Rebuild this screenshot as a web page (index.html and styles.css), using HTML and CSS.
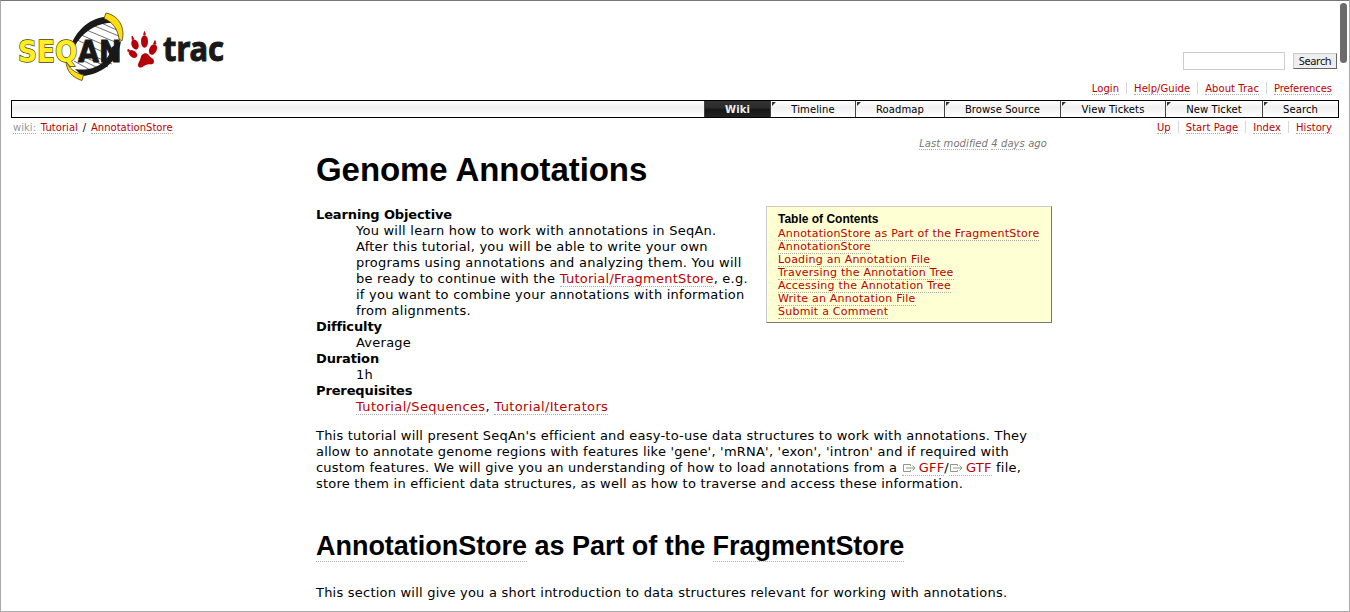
FILE: index.html
```html
<!DOCTYPE html>
<html lang="en">
<head>
<meta charset="utf-8">
<title>Genome Annotations</title>
<link rel="stylesheet" href="styles.css">
</head>
<body>
<div class="page">
  <header class="banner">
    <svg class="logo" width="215" height="75" viewBox="14 9 215 75" role="img" aria-label="SeqAn trac">
      <path d="M105 18C89 21 74 34 71 52L78 72C98 71 116 61 120 40C121 29 116 19 105 18Z" fill="#fff"/>
      <g stroke="#333" stroke-width=".7">
        <path d="M97 21l24 11M90 24l31 13M84 29l36 15M79 34l39 17M75 39l30 14M84 57l24 10M78 58l22 11M74 61l18 10M96 57l16 7"/>
      </g>
      <path d="M70 48C75 32 88 19 104 17L112 23C99 22 82 31 74 48Z" fill="#1a1a1a"/>
      <path d="M121 41C118 63 100 75 82 76L75 69C92 72 108 64 112 47Z" fill="#1a1a1a"/>
      <path d="M106 13C117 15 126 26 122 41L119 39C118 30 113 22 104 18.500Z" fill="#fd1" stroke="#443d08" stroke-width=".8"/>
      <path d="M67 61C68 68 75 73 83.500 75L82 80.500C73 78 66 71 66 61Z" fill="#fd1" stroke="#443d08" stroke-width=".8"/>
      <text class="logo-name" x="18" y="61.800" textLength="59.500" lengthAdjust="spacingAndGlyphs" fill="#fe2" stroke="#443d08" stroke-width="1.400">SEQ</text>
      <text class="logo-name" x="78" y="61.800" textLength="43.500" lengthAdjust="spacingAndGlyphs" fill="#181818" stroke="#181818">AN</text>
      <g fill="#b50008">
        <ellipse cx="144.500" cy="41.500" rx="3.500" ry="6.200"/>
        <ellipse cx="135" cy="44.500" rx="3.500" ry="5.200" transform="rotate(-20 135 44.500)"/>
        <ellipse cx="153" cy="49.500" rx="3.700" ry="5.500" transform="rotate(25 153 49.500)"/>
        <ellipse cx="133" cy="54" rx="3.200" ry="4.700" transform="rotate(-50 133 54)"/>
        <path d="M144.500 31.500l-1 3h2zM132 36l0 3.500l2-.5zM155 40.500l-1.500 3.500l2.500 0zM128 49l-.2 2.500l2-.7z" stroke="#b50008" stroke-width=".8"/>
        <path d="M144 53.500C148 52 149 56 151 57.500C155 59 155 64 151 64.500C147 64 146 65 142.500 67C138 69 137 65 139 62C141 59 140 55 144 53.500Z"/>
      </g>
      <text class="logo-trac" x="163" y="61" textLength="61" lengthAdjust="spacingAndGlyphs" fill="#181818" stroke="#181818">trac</text>
    </svg>
    <div class="tools">
      <form class="search"><input type="text" aria-label="Search"><button type="button">Search</button></form>
      <ul class="links"><li><a>Login</a></li><li><a>Help/Guide</a></li><li><a>About Trac</a></li><li><a>Preferences</a></li></ul>
    </div>
  </header>
  <nav class="mainnav">
    <a class="tab wiki">Wiki</a><a class="tab timeline">Timeline</a><a class="tab roadmap">Roadmap</a><a class="tab browse">Browse Source</a><a class="tab tickets">View Tickets</a><a class="tab new">New Ticket</a><a class="tab find">Search</a>
  </nav>
  <div class="context">
    <div class="crumbs"><a class="muted">wiki:</a> <a>Tutorial</a> / <a>AnnotationStore</a></div>
    <ul class="links"><li><a>Up</a></li><li><a>Start Page</a></li><li><a>Index</a></li><li><a>History</a></li></ul>
  </div>
  <main class="content">
    <p class="modified"><a>Last modified</a> <a>4 days</a> ago</p>
    <h1>Genome Annotations</h1>
    <div class="intro">
      <dl>
        <dt>Learning Objective</dt>
        <dd>You will learn how to work with annotations in SeqAn.<br>After this tutorial, you will be able to write your own<br>programs using annotations and analyzing them. You will<br>be ready to continue with the <a>Tutorial/FragmentStore</a>, e.g.<br>if you want to combine your annotations with information<br>from alignments.</dd>
        <dt>Difficulty</dt><dd>Average</dd>
        <dt>Duration</dt><dd>1h</dd>
        <dt>Prerequisites</dt><dd class="required"><a>Tutorial/Sequences</a>, <a>Tutorial/Iterators</a></dd>
      </dl>
      <aside class="toc">
        <h4>Table of Contents</h4>
        <ol><li><a>AnnotationStore as Part of the FragmentStore</a></li><li><a>AnnotationStore</a></li><li><a>Loading an Annotation File</a></li><li><a>Traversing the Annotation Tree</a></li><li><a>Accessing the Annotation Tree</a></li><li><a>Write an Annotation File</a></li><li><a>Submit a Comment</a></li></ol>
      </aside>
    </div>
    <p class="text">This tutorial will present SeqAn's efficient and easy-to-use data structures to work with annotations. They<br>allow to annotate genome regions with features like 'gene', 'mRNA', 'exon', 'intron' and if required with<br>custom features. We will give you an understanding of how to load annotations from a <a class="ext"><svg width="13" height="8" viewBox="0 0 13 8"><path d="M7.500 2V.5H.5v7h7V6M3 4h9M9.500 1.500L12 4L9.500 6.500" fill="none" stroke="#8c9a84"/></svg>GFF</a>/<a class="ext"><svg width="13" height="8" viewBox="0 0 13 8"><path d="M7.500 2V.5H.5v7h7V6M3 4h9M9.500 1.500L12 4L9.500 6.500" fill="none" stroke="#8c9a84"/></svg>GTF</a> file,<br>store them in efficient data structures, as well as how to traverse and access these information.</p>
    <h2><a>AnnotationStore</a> as Part of the <a>FragmentStore</a></h2>
    <p class="text">This section will give you a short introduction to data structures relevant for working with annotations.</p>
  </main>
  <div class="scrollbar"></div>
</div>
</body>
</html>
```
FILE: styles.css
```css
* { box-sizing: border-box; }
body { margin: 0; background: #fff; color: #000; font: 13px/16px "DejaVu Sans", Verdana, sans-serif; }
.page { position: relative; height: 612px; overflow: hidden; border: 1px solid #aaa; border-top-color: #777; padding: 0 10px; }
a { color: #b00; border-bottom: 1px dotted #aaa; }
ul, ol { list-style: none; margin: 0; padding: 0; }
.banner { height: 99px; display: flex; justify-content: space-between; padding: 8px 0 0 3px; }
.logo { display: block; }
.logo-name { font: bold 30px "DejaVu Sans", sans-serif; paint-order: stroke; }
.logo-trac { font: bold 34px "Noto Sans", "Open Sans", sans-serif; }
.tools { padding: 43px 2px 0 0; }
.search { display: flex; justify-content: flex-end; gap: 8px; height: 18px; }
.search input { width: 102px; height: 18px; border: 1px solid #ccc; padding: 0; background: #fff; }
.search button { width: 44px; height: 16px; margin-top: 1px; padding: 0; border: 1px solid; border-color: #ccc #666 #666 #ccc; background: #eee; color: #111; font: 11px/12px "Noto Sans", sans-serif; letter-spacing: -.4px; white-space: nowrap; }
.links { display: flex; justify-content: flex-end; font-size: 10px; line-height: 14px; letter-spacing: .06px; }
.tools .links { margin-top: 12px; padding-right: 5px; }
.tools .links li:last-child { letter-spacing: -.07px; }
.links li { padding: 0 7px; border-right: 1px solid #d7d7d7; height: 12px; }
.links li:last-child { border: 0; padding-right: 0; }
.mainnav { display: flex; justify-content: flex-end; height: 18px; border: 1px solid #000; background: linear-gradient(#fff, #f1f1f1 40%, #fff); font-size: 10px; line-height: 18px; letter-spacing: .1px; }
.tab { position: relative; height: 16px; color: #000; border: 0; border-left: 1px solid #444; text-align: center; }
.tab::before { content: ""; position: absolute; left: 1px; top: 1px; border-top: 4px solid #333; border-right: 4px solid transparent; }
.wiki { width: 66px; background: linear-gradient(#333, #2b2b2b 45%, #151515 50%, #222); color: #eee; font-weight: bold; }
.wiki::before { display: none; }
.timeline { width: 85px; }
.roadmap { width: 89px; }
.browse { width: 116px; }
.tickets { width: 105px; }
.new { width: 97px; }
.find { width: 76px; }
.context { display: flex; justify-content: space-between; padding: 3px 7px 0 2px; height: 18px; font-size: 10px; line-height: 14px; }
.crumbs { word-spacing: 1.6px; letter-spacing: .03px; }
.muted { color: #999; }
.content { width: 736px; margin-left: 305px; }
.modified { margin: 0; padding: 1px 5px 0 0; text-align: right; font-size: 10px; line-height: 13px; font-style: italic; color: #777; letter-spacing: .08px; }
.modified a { color: #777; }
h1 { margin: 0; font: bold 33px/40px "Liberation Sans", Arial, sans-serif; letter-spacing: -.07px; }
.intro { display: flex; justify-content: space-between; align-items: flex-start; padding-top: 16px; }
dl { margin: 1px 0 0; white-space: nowrap; }
dt { font-weight: bold; letter-spacing: -.13px; }
dd { margin-left: 40px; letter-spacing: .24px; }
.required { letter-spacing: .35px; }
.toc { width: 286px; height: 117px; padding: 6px 11px; background: #ffffd4; border: 1px solid; border-color: #ccc #777 #777 #ccc; font-size: 11px; line-height: 13px; letter-spacing: .23px; white-space: nowrap; }
.toc h4 { margin: 0 0 1px; font: bold 12px/13px "Liberation Sans", Arial, sans-serif; letter-spacing: 0; }
.toc li { height: 13px; }
.text { margin: 13px 0 0; white-space: nowrap; letter-spacing: .22px; }
.ext svg { margin: 0 3px 0 1px; }
h2 { margin: 38px 0 0; font: bold 27px/32px "Liberation Sans", Arial, sans-serif; letter-spacing: -.03px; }
h2 a { color: #000; }
h2 + .text { margin-top: 23px; }
.scrollbar { position: absolute; right: 2px; top: 2px; width: 7px; height: 60px; border-radius: 4px; background: #6b6b6b; }
```
